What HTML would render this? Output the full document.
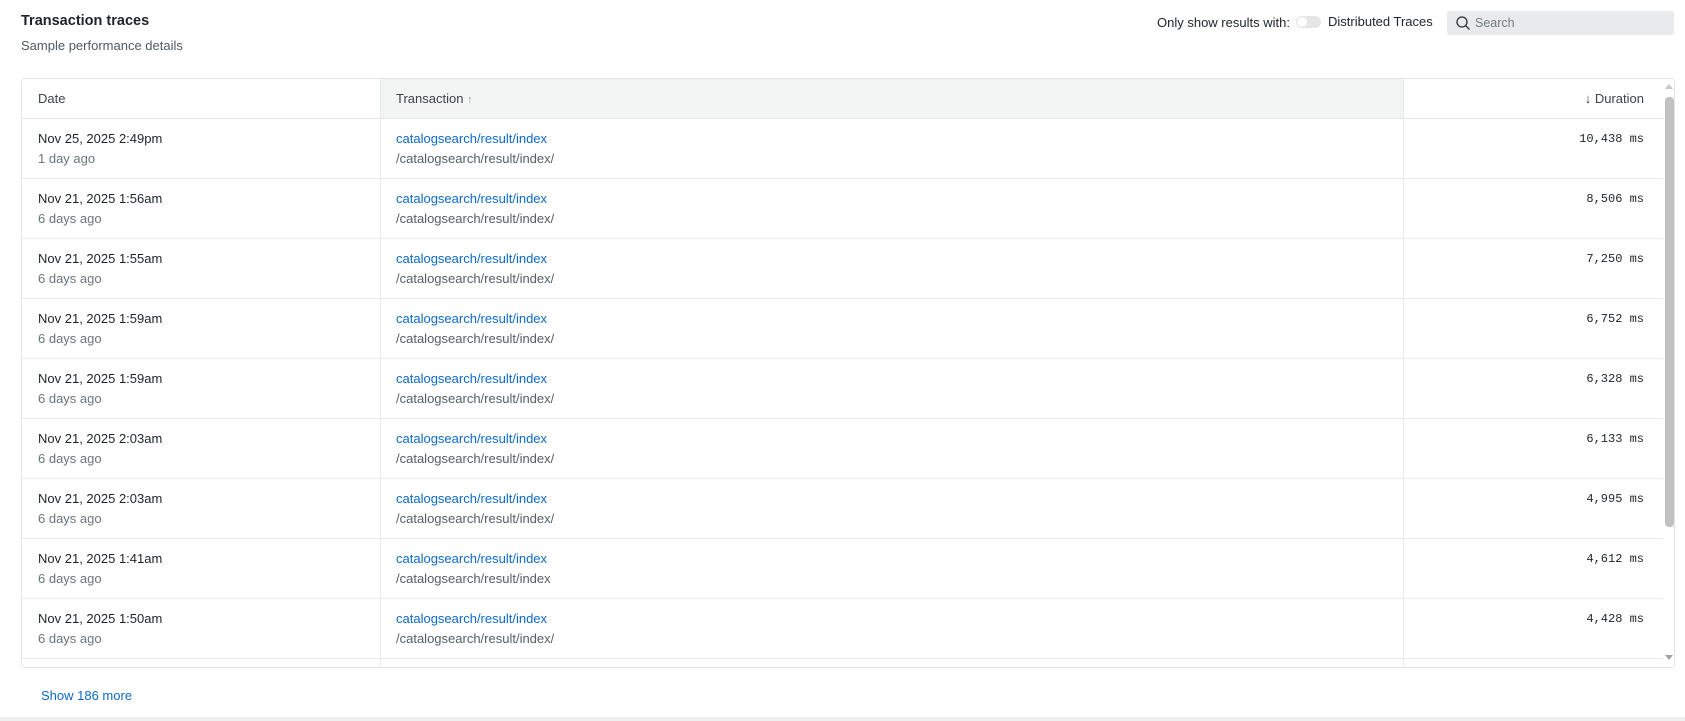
<!DOCTYPE html>
<html><head><meta charset="utf-8"><style>
*{box-sizing:border-box;margin:0;padding:0}
body{width:1685px;height:721px;background:#fff;font-family:"Liberation Sans",sans-serif;color:#2a2f33;position:relative;overflow:hidden}
.abs{position:absolute;white-space:nowrap}
.title{left:21px;top:13px;font-size:14.5px;font-weight:bold;color:#1d2428}
.sub{left:21px;top:38px;font-size:13px;color:#505a60}
.tbl{position:absolute;left:21px;top:78px;width:1654px;height:590px;border:1px solid #e3e5e6;border-radius:3px;overflow:hidden}
.hdr{position:absolute;left:0;top:0;height:40px;width:1641px;border-bottom:1px solid #e3e5e6;font-size:13px;color:#3b4448}
.row{position:absolute;left:0;width:1641px;height:60px;border-bottom:1px solid #e8eaeb}
.d1{position:absolute;left:16px;top:12px;font-size:13px;color:#1d2428}
.d2{position:absolute;left:16px;top:32px;font-size:13px;color:#6b7478}
.t1{position:absolute;left:374px;top:12px;font-size:13px;color:#0b6acb}
.t2{position:absolute;left:374px;top:32px;font-size:13px;color:#555e63}
.dur{position:absolute;right:19px;top:13px;font-family:"Liberation Mono",monospace;font-size:12px;color:#1d2428}
.vl{position:absolute;top:0;width:1px;background:#e8eaeb;height:590px}
</style></head><body>
<div class="abs title">Transaction traces</div>
<div class="abs sub">Sample performance details</div>
<div class="abs" style="left:1157px;top:15px;font-size:13px;color:#1d2428">Only show results with:</div>
<div class="abs" style="left:1296px;top:16px;width:25px;height:12px;border-radius:6px;background:#e3e5e6"><div style="position:absolute;left:1px;top:1px;width:10px;height:10px;border-radius:50%;background:#fff"></div></div>
<div class="abs" style="left:1328px;top:14px;font-size:13px;color:#1d2428">Distributed Traces</div>
<div class="abs" style="left:1447px;top:11px;width:227px;height:24px;background:#e8eaeb;border-radius:3px">
<svg style="position:absolute;left:8px;top:4px" width="16" height="16" viewBox="0 0 16 16"><circle cx="7" cy="7" r="5" fill="none" stroke="#293338" stroke-width="1.3"/><path d="M10.6 10.6L14.5 14.5" stroke="#293338" stroke-width="1.3"/></svg>
<span style="position:absolute;left:28px;top:5px;font-size:12.5px;color:#737d82">Search</span></div>
<div class="tbl">
<div style="position:absolute;left:358px;top:0;width:1023px;height:40px;background:#f3f4f4"></div>
<div class="hdr">
<span class="abs" style="left:16px;top:12px">Date</span>
<span class="abs" style="left:374px;top:12px">Transaction <span style="color:#9aa2a6;font-size:11px">↑</span></span>
<span class="abs" style="right:19px;top:12px">↓ Duration</span>
</div>
<div class="vl" style="left:358px"></div>
<div class="vl" style="left:1381px"></div>
<div class="row" style="top:40px"><div class="d1">Nov 25, 2025 2:49pm</div><div class="d2">1 day ago</div><div class="t1">catalogsearch/result/index</div><div class="t2">/catalogsearch/result/index/</div><div class="dur">10,438 ms</div></div>
<div class="row" style="top:100px"><div class="d1">Nov 21, 2025 1:56am</div><div class="d2">6 days ago</div><div class="t1">catalogsearch/result/index</div><div class="t2">/catalogsearch/result/index/</div><div class="dur">8,506 ms</div></div>
<div class="row" style="top:160px"><div class="d1">Nov 21, 2025 1:55am</div><div class="d2">6 days ago</div><div class="t1">catalogsearch/result/index</div><div class="t2">/catalogsearch/result/index/</div><div class="dur">7,250 ms</div></div>
<div class="row" style="top:220px"><div class="d1">Nov 21, 2025 1:59am</div><div class="d2">6 days ago</div><div class="t1">catalogsearch/result/index</div><div class="t2">/catalogsearch/result/index/</div><div class="dur">6,752 ms</div></div>
<div class="row" style="top:280px"><div class="d1">Nov 21, 2025 1:59am</div><div class="d2">6 days ago</div><div class="t1">catalogsearch/result/index</div><div class="t2">/catalogsearch/result/index/</div><div class="dur">6,328 ms</div></div>
<div class="row" style="top:340px"><div class="d1">Nov 21, 2025 2:03am</div><div class="d2">6 days ago</div><div class="t1">catalogsearch/result/index</div><div class="t2">/catalogsearch/result/index/</div><div class="dur">6,133 ms</div></div>
<div class="row" style="top:400px"><div class="d1">Nov 21, 2025 2:03am</div><div class="d2">6 days ago</div><div class="t1">catalogsearch/result/index</div><div class="t2">/catalogsearch/result/index/</div><div class="dur">4,995 ms</div></div>
<div class="row" style="top:460px"><div class="d1">Nov 21, 2025 1:41am</div><div class="d2">6 days ago</div><div class="t1">catalogsearch/result/index</div><div class="t2">/catalogsearch/result/index</div><div class="dur">4,612 ms</div></div>
<div class="row" style="top:520px"><div class="d1">Nov 21, 2025 1:50am</div><div class="d2">6 days ago</div><div class="t1">catalogsearch/result/index</div><div class="t2">/catalogsearch/result/index/</div><div class="dur">4,428 ms</div></div>
<div style="position:absolute;left:1641px;top:0;width:12px;height:590px;background:#fff"></div>
<div style="position:absolute;left:1643px;top:18px;width:9px;height:430px;background:#c1c1c1;border-radius:4px"></div>
<div style="position:absolute;left:1643px;top:5px;width:0;height:0;border-left:4px solid transparent;border-right:4px solid transparent;border-bottom:5px solid #c8c8c8"></div>
<div style="position:absolute;left:1643px;top:576px;width:0;height:0;border-left:4px solid transparent;border-right:4px solid transparent;border-top:5px solid #a3a3a3"></div>
</div>
<div class="abs" style="left:41px;top:688px;font-size:13px;color:#0b6acb">Show 186 more</div>
<div style="position:absolute;left:0;top:717px;width:1685px;height:4px;background:#eeefef"></div>
</body></html>
